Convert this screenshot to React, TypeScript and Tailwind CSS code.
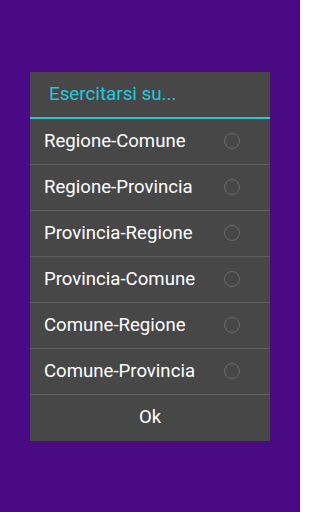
const options = [
  "Regione-Comune",
  "Regione-Provincia",
  "Provincia-Regione",
  "Provincia-Comune",
  "Comune-Regione",
  "Comune-Provincia",
];

export default function App() {
  return (
    <div
      className="flex h-[512px] w-[300px] items-center justify-center bg-[#4a0a84]"
      style={{ fontFamily: "Roboto, 'Liberation Sans', sans-serif" }}
    >
      <div className="flex w-[240px] flex-col bg-[#474747]">
        <div className="flex h-[45px] items-center pl-[19px] text-[18.8px] text-[#22c9dd]">
          Esercitarsi su...
        </div>
        <div className="h-[2px] bg-[#22c9dd]" />
        {options.map((o) => (
          <div key={o} className="flex h-[46px] items-center justify-between border-b border-[#5f5f5f] pl-[14px] pr-[30px]">
            <span className="pt-[1px] text-[18.6px] text-white">{o}</span>
            <span className="h-[16px] w-[16px] rounded-full border-[1.5px] border-[#6a6a6a]" />
          </div>
        ))}
        <button className="flex h-[46px] items-center justify-center text-[18.6px] text-white">
          Ok
        </button>
      </div>
    </div>
  );
}
